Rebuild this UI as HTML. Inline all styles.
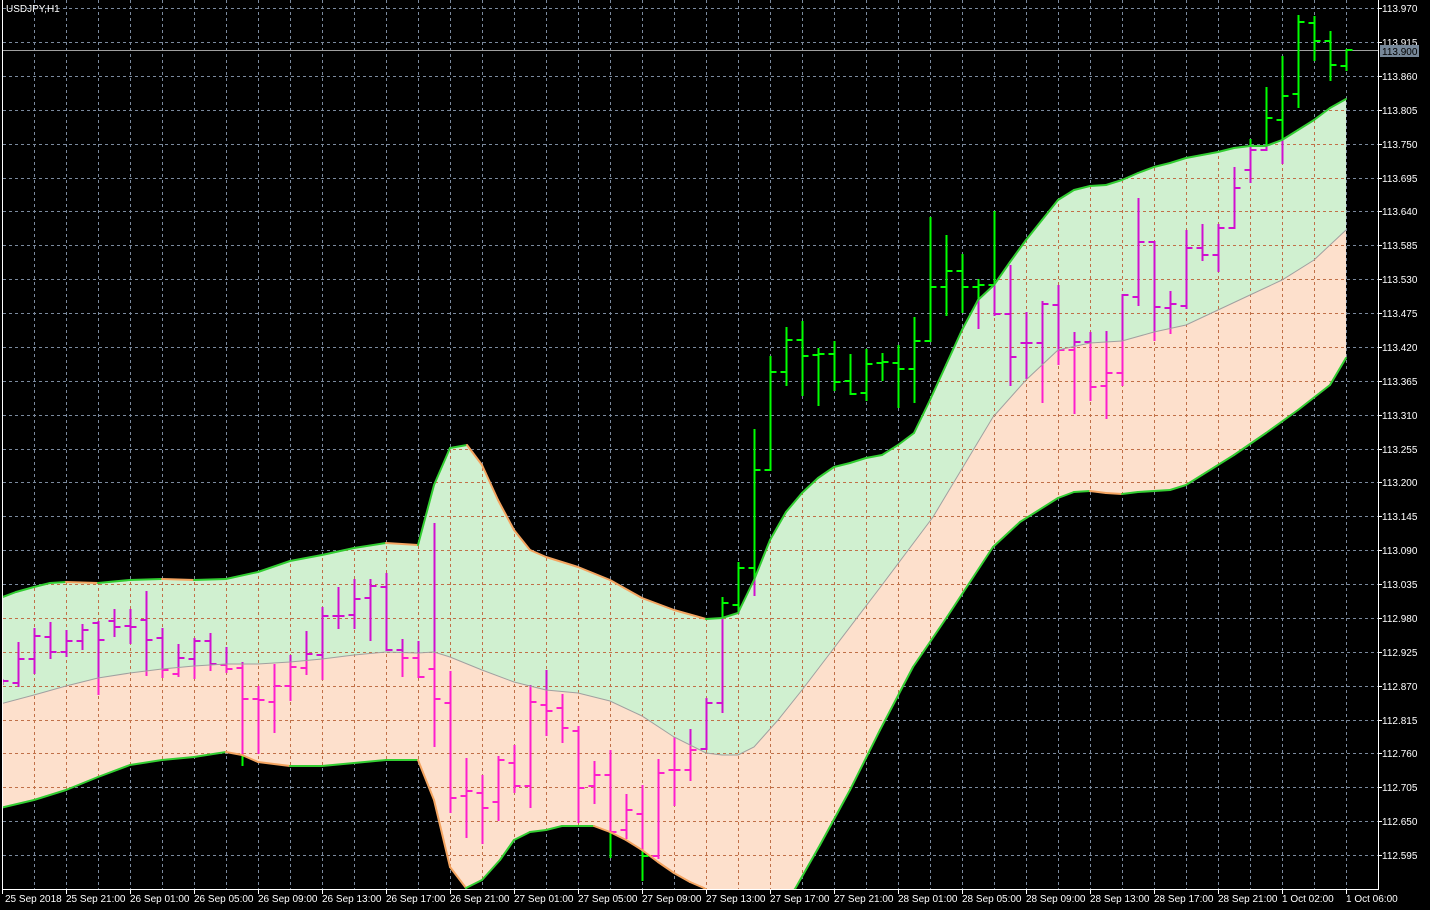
<!DOCTYPE html>
<html><head><meta charset="utf-8"><style>
html,body{margin:0;padding:0;background:#000;width:1430px;height:910px;overflow:hidden}
svg{display:block}
text{font-family:"Liberation Sans","DejaVu Sans",sans-serif;font-size:10px;fill:#fff}
</style></head><body>
<svg id="s" width="1430" height="910" xmlns="http://www.w3.org/2000/svg">
<defs><clipPath id="c"><rect x="3" y="0" width="1375" height="889"/></clipPath>
<clipPath id="fc"><polygon id="fcp"/></clipPath>
<clipPath id="gc"><polygon id="gcp"/></clipPath>
<clipPath id="pc"><polygon id="pcp"/></clipPath></defs>
<rect width="1430" height="910" fill="#000"/>
<g clip-path="url(#c)" style="isolation:isolate">
  <g id="grid" stroke="#7b8a9e" stroke-width="1" stroke-dasharray="3,3"></g>
  <line x1="3" y1="50.5" x2="1378" y2="50.5" stroke="#a0a0a0" stroke-width="1"/>
  <path id="bars" fill="none" stroke="#00ff00" stroke-width="2"></path>
  <polygon id="pg" fill="#d0f0d0" style="mix-blend-mode:difference"></polygon>
  <polygon id="pp" fill="#fde0cc" style="mix-blend-mode:difference"></polygon>
  <g clip-path="url(#fc)"><g id="grid2" stroke="#c07048" stroke-width="1" stroke-dasharray="3,3"></g></g>
  <g clip-path="url(#gc)"><path id="bg" fill="none" stroke="#d00fd0" stroke-width="2"></path></g>
  <g clip-path="url(#pc)"><path id="bp" fill="none" stroke="#fd1fcc" stroke-width="2"></path></g>
  <polyline id="mid" fill="none" stroke="#a0a0a0" stroke-width="1"></polyline>
  <g id="bl" stroke-width="2" fill="none"></g>
</g>
<line x1="2.5" y1="0" x2="2.5" y2="889" stroke="#fff"/>
<line x1="1378.5" y1="0" x2="1378.5" y2="890" stroke="#fff"/>
<line x1="2" y1="889.5" x2="1379" y2="889.5" stroke="#fff"/>
<g id="ticks" stroke="#fff"></g>
<text x="6" y="12" font-size="9">USDJPY,H1</text>
<g>
<text x="1382" y="12">113.970</text>
<text x="1382" y="46">113.915</text>
<text x="1382" y="80">113.860</text>
<text x="1382" y="114">113.805</text>
<text x="1382" y="148">113.750</text>
<text x="1382" y="182">113.695</text>
<text x="1382" y="215">113.640</text>
<text x="1382" y="249">113.585</text>
<text x="1382" y="283">113.530</text>
<text x="1382" y="317">113.475</text>
<text x="1382" y="351">113.420</text>
<text x="1382" y="385">113.365</text>
<text x="1382" y="419">113.310</text>
<text x="1382" y="453">113.255</text>
<text x="1382" y="486">113.200</text>
<text x="1382" y="520">113.145</text>
<text x="1382" y="554">113.090</text>
<text x="1382" y="588">113.035</text>
<text x="1382" y="622">112.980</text>
<text x="1382" y="656">112.925</text>
<text x="1382" y="690">112.870</text>
<text x="1382" y="724">112.815</text>
<text x="1382" y="757">112.760</text>
<text x="1382" y="791">112.705</text>
<text x="1382" y="825">112.650</text>
<text x="1382" y="859">112.595</text>
</g>
<rect x="1380" y="45" width="39" height="12" fill="#778899"/>
<text x="1382" y="55" style="fill:#000">113.900</text>
<g>
<text x="5" y="902">25 Sep 2018</text>
<text x="66" y="902">25 Sep 21:00</text>
<text x="130" y="902">26 Sep 01:00</text>
<text x="194" y="902">26 Sep 05:00</text>
<text x="258" y="902">26 Sep 09:00</text>
<text x="322" y="902">26 Sep 13:00</text>
<text x="386" y="902">26 Sep 17:00</text>
<text x="450" y="902">26 Sep 21:00</text>
<text x="514" y="902">27 Sep 01:00</text>
<text x="578" y="902">27 Sep 05:00</text>
<text x="642" y="902">27 Sep 09:00</text>
<text x="706" y="902">27 Sep 13:00</text>
<text x="770" y="902">27 Sep 17:00</text>
<text x="834" y="902">27 Sep 21:00</text>
<text x="898" y="902">28 Sep 01:00</text>
<text x="962" y="902">28 Sep 05:00</text>
<text x="1026" y="902">28 Sep 09:00</text>
<text x="1090" y="902">28 Sep 13:00</text>
<text x="1154" y="902">28 Sep 17:00</text>
<text x="1218" y="902">28 Sep 21:00</text>
<text x="1282" y="902">1 Oct 02:00</text>
<text x="1346" y="902">1 Oct 06:00</text>
</g>
</svg>
<script>
var NS="http://www.w3.org/2000/svg";
function el(t,a,p){var e=document.createElementNS(NS,t);for(var k in a)e.setAttribute(k,a[k]);p.appendChild(e);return e;}
var ys=[8,42,76,110,144,178,211,245,279,313,347,381,415,449,482,516,550,584,618,652,686,720,753,787,821,855];
var g=document.getElementById('grid'),g2=document.getElementById('grid2'),tk=document.getElementById('ticks');
ys.forEach(function(y){el('line',{x1:3,y1:y+.5,x2:1378,y2:y+.5},g);el('line',{x1:3,y1:y+.5,x2:1378,y2:y+.5},g2);el('line',{x1:1378,y1:y+.5,x2:1382,y2:y+.5},tk);});
for(var x=34;x<1378;x+=32){el('line',{x1:x+.5,y1:0,x2:x+.5,y2:889},g);el('line',{x1:x+.5,y1:0,x2:x+.5,y2:889},g2);}
for(var x=2;x<1378;x+=64){el('line',{x1:x+.5,y1:889,x2:x+.5,y2:894},tk);}
var B=[[680,684,681,681],[643,686,683,659],[629,673,659,636],[623,658,637,652],[631,656,652,641],[625,649,641,630],[622,694,623,640],[610,636,621,627],[610,643,626,627],[592,675,620,640],
[629,677,638,670],[645,676,674,658],[639,678,659,641],[634,670,641,664],[648,672,665,669],[663,765,668,699],[687,753,699,700],[665,732,702,686],[656,700,686,667],[632,674,668,654],
[608,679,655,616],[588,628,616,616],[580,628,615,599],[580,640,598,586],[574,650,587,650],[640,676,650,658],[642,677,658,677],[524,746,669,699],[672,812,703,798],[759,837,796,791],
[776,843,793,808],[757,820,802,760],[746,792,763,786],[686,807,786,702],[671,735,705,711],[695,742,708,728],[727,822,731,788],[762,803,786,775],[751,857,775,832],[795,838,830,810],
[786,880,814,856],[760,858,856,773],[738,805,770,770],[730,780,770,750],[699,749,749,703],[598,712,703,603],[563,613,605,568],[430,595,568,470],[357,470,470,372],[328,385,372,340],
[322,395,340,356],[349,405,355,354],[342,390,354,382],[355,394,381,394],[350,400,393,364],[354,380,363,362],[346,407,363,369],[318,402,369,341],[218,341,341,287],[236,315,287,271],
[255,312,271,287],[280,328,287,285],[212,315,285,314],[266,385,314,357],[313,378,343,343],[302,402,343,304],[286,364,305,350],[333,413,350,342],[333,400,342,387],[332,418,386,373],
[295,385,373,295],[199,305,297,242],[242,340,242,307],[292,333,308,304],[231,308,306,248],[225,260,248,255],[225,271,255,228],[168,228,228,188],[140,182,170,150],[88,150,150,118],
[57,163,120,96],[16,107,94,22],[17,60,23,41],[32,80,41,65],[50,70,66,50]];
var d="";B.forEach(function(b,k){var x=2+16*k+.5;d+="M"+x+" "+(b[0]-1)+"V"+(b[1]+1)+"M"+(x-6)+" "+b[2]+"H"+x+"M"+x+" "+b[3]+"H"+(x+6);});
document.getElementById('bars').setAttribute('d',d);
document.getElementById('bg').setAttribute('d',d);
document.getElementById('bp').setAttribute('d',d);
var U=[[0,598],[16,592],[34,587],[50,583],[66,582],[98,583],[130,580],[162,579],[194,580],[226,579],[258,572],[290,561],[322,555],[354,548],[386,543],[418,545],[434,485],[450,448],[467,445],[482,465],[498,500],[514,530],[530,550],[546,557],[578,567],[610,580],[642,598],[674,610],[706,619],[722,618],[738,613],[754,580],[770,540],[786,512],[802,493],[818,478],[834,467],[850,463],[866,458],[882,455],[898,445],[914,433],[930,400],[946,365],[962,330],[978,300],[994,285],[1010,262],[1026,240],[1042,220],[1058,200],[1074,190],[1090,186],[1106,185],[1122,180],[1138,173],[1154,167],[1170,163],[1186,158],[1202,155],[1218,152],[1234,148],[1250,146],[1266,146],[1282,140],[1298,130],[1314,120],[1330,108],[1346,99]];
var M=[[0,704],[34,695],[66,686],[98,678],[130,673],[162,669],[194,666],[226,664],[258,664],[290,662],[322,659],[354,655],[386,652],[418,653],[434,652],[450,657],[482,670],[514,682],[546,690],[578,693],[610,701],[642,716],[674,737],[706,753],[722,755],[738,755],[754,747],[778,720],[802,690],[834,648],[882,585],[933,517],[963,467],[993,417],[1026,380],[1058,350],[1090,343],[1122,341],[1154,332],[1186,325],[1218,310],[1250,295],[1282,280],[1314,260],[1346,230]];
var L=[[0,808],[34,800],[66,790],[98,777],[130,765],[162,760],[194,757],[226,752],[242,755],[258,762],[290,766],[322,766],[354,763],[386,760],[418,760],[434,800],[450,867],[466,888],[482,880],[500,860],[514,840],[530,832],[546,830],[562,826],[594,826],[610,832],[626,840],[642,850],[658,862],[674,873],[690,882],[704,888],[720,900],[760,920],[795,889],[820,845],[850,790],[880,730],[913,667],[947,617],[993,547],[1020,522],[1058,498],[1074,492],[1090,491],[1106,493],[1122,494],[1138,492],[1170,490],[1186,485],[1202,475],[1234,455],[1266,433],[1298,410],[1330,385],[1346,358]];
function pts(a){return a.map(function(p){return p[0]+","+p[1];}).join(" ");}
var gp=pts(U)+" "+pts(M.slice().reverse()), pp=pts(M)+" "+pts(L.slice().reverse());
document.getElementById('pg').setAttribute('points',gp);
document.getElementById('pp').setAttribute('points',pp);
document.getElementById('gcp').setAttribute('points',gp);
document.getElementById('pcp').setAttribute('points',pp);
document.getElementById('fcp').setAttribute('points',pts(U)+" "+pts(L.slice().reverse()));
document.getElementById('mid').setAttribute('points',pts(M));
var bl=document.getElementById('bl');
[U,L].forEach(function(a){for(var i=1;i<a.length;i++){var up=a[i][1]<=a[i-1][1];el('line',{x1:a[i-1][0],y1:a[i-1][1],x2:a[i][0],y2:a[i][1],stroke:up?"#32cd32":"#f4a460","stroke-linecap":"round"},bl);}});
</script>
</body></html>
